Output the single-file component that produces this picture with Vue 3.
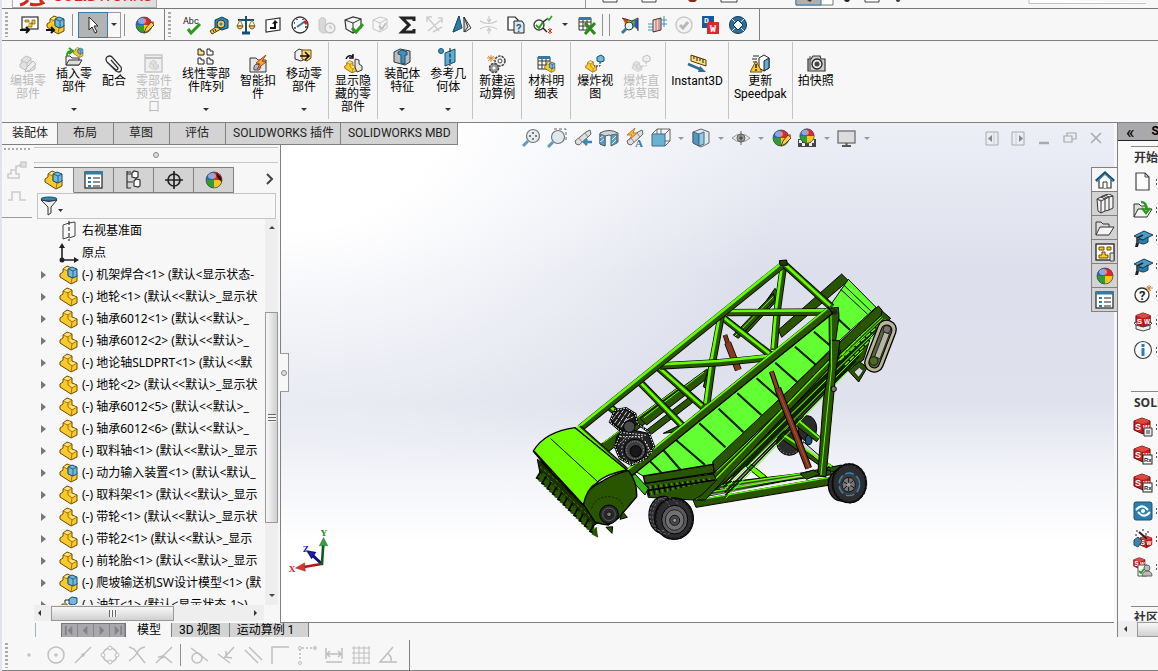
<template>
  <div class="app">
    <!-- clipped title strip -->
    <header class="title-strip">
      <div class="brand">
        <svg class="brand-mark" viewBox="0 0 26 8"><path d="M1 5Q6 4 9 0M11 4Q18 6 24 3L21 0" /></svg>
        <span class="brand-name"><b>SOLID</b>WORKS</span>
      </div>
      <div class="quick-bar">
        <svg viewBox="0 0 560 8">
          <path d="M17 0V2H31V0M56 0V2H70V0M135 0V2H151V0M279 0V2H293V0" fill="#fff" stroke="#444" />
          <path d="M102 0H111L109 2H104Z" fill="#8c2a16" />
          <path d="M210 -1V5H247V-1" fill="#fff" stroke="#777" />
          <path d="M210 -1V5H235V-1" fill="#b0b0b0" stroke="#2f7fb5" />
          <path d="M221 0H226L224 2Z" fill="#333" />
          <circle cx="261" cy="-1" r="3" fill="#222" />
          <circle cx="312" cy="0" r="2" fill="#333" />
          <path d="M443 -1V3.5H580" fill="#fff" stroke="#c4c4c4" />
        </svg>
      </div>
    </header>

    <!-- standard and tools toolbars -->
    <nav class="toolbar">
      <div class="tool-group first">
        <span class="grip"></span>
        <button v-for="t in fileTools" :key="t" class="tool" :aria-label="t"><svg viewBox="0 0 20 20" v-html="icons[t]"></svg></button>
        <span class="sep"></span>
        <div class="select-tool">
          <button class="select-main" aria-label="select"><svg viewBox="0 0 20 20" v-html="icons.cursor"></svg></button>
          <button class="select-drop" aria-label="select options"><i class="caret"></i></button>
        </div>
        <span class="sep"></span>
        <button class="tool" aria-label="appearance"><svg viewBox="0 0 20 20" v-html="icons.ballPencil"></svg></button>
      </div>
      <div class="tool-group second">
        <span class="grip"></span>
        <button v-for="t in evalTools" :key="t" class="tool" :aria-label="t"><svg viewBox="0 0 20 20" v-html="icons[t]"></svg></button>
        <button class="drop" aria-label="more checks"><i class="caret"></i></button>
        <button class="tool" aria-label="excel"><svg viewBox="0 0 20 20" v-html="icons.excel"></svg></button>
        <span class="sep double"></span>
        <button v-for="t in simTools" :key="t" class="tool" :aria-label="t"><svg viewBox="0 0 20 20" v-html="icons[t]"></svg></button>
      </div>
    </nav>

    <!-- command ribbon -->
    <section class="ribbon">
      <div v-for="(group, g) in ribbon" :key="g" class="ribbon-group">
        <button v-for="c in group" :key="c.label" class="command" :class="{ menu: c.menu }" :disabled="c.off">
          <svg viewBox="0 0 20 20" v-html="icons[c.icon]"></svg>
          <span class="command-label">{{ c.label }}</span>
          <i v-if="c.menu" class="caret"></i>
        </button>
      </div>
    </section>

    <div class="workspace">
      <nav class="ribbon-tabs">
        <button v-for="t in tabs" :key="t" :class="{ active: t === tab }" @click="tab = t">{{ t }}</button>
      </nav>

      <div class="side">
        <div class="mini-bar">
          <span class="grip-row"></span>
          <button aria-label="steps"><svg viewBox="0 0 20 20" v-html="icons.steps"></svg></button>
          <button aria-label="pulse"><svg viewBox="0 0 20 20" v-html="icons.pulse"></svg></button>
        </div>

        <aside class="manager">
          <div class="splitter"><i class="knob"></i></div>
          <div class="manager-tabs">
            <button v-for="(m, i) in managerTabs" :key="m" :class="{ active: i === 0 }" :aria-label="m"><svg viewBox="0 0 20 20" v-html="icons[m]"></svg></button>
            <button class="more" aria-label="more"><svg viewBox="0 0 20 20"><path d="M11 4L16 9L11 14" fill="none" stroke="#444" stroke-width="2" /></svg></button>
          </div>
          <div class="filter">
            <label for="tree-filter"><svg viewBox="0 0 26 20" v-html="icons.filter"></svg></label>
            <input id="tree-filter" v-model="filter" type="text" />
          </div>
          <div class="tree-area">
            <ul class="tree">
              <li v-for="n in tree" :key="n.text">
                <button v-if="n.icon !== 'plane' && n.icon !== 'origin'" class="twisty" aria-label="expand"></button>
                <span v-else class="twisty-gap"></span>
                <svg viewBox="0 0 20 20" v-html="icons[n.icon]"></svg>
                <span class="node-text">{{ n.text }}</span>
              </li>
            </ul>
            <div class="vscroll">
              <i class="arrow up"></i>
              <div class="thumb"><i></i></div>
              <i class="arrow down"></i>
            </div>
          </div>
          <div class="hscroll">
            <i class="arrow left"></i>
            <div class="thumb"><i></i></div>
            <i class="arrow right"></i>
          </div>
        </aside>
      </div>

      <main class="viewport">
        <div class="view-bar">
          <div class="view-tools">
            <template v-for="v in viewTools" :key="v.icon">
              <button class="view-tool" :aria-label="v.icon"><svg viewBox="0 0 20 20" v-html="icons[v.icon]"></svg></button>
              <button v-if="v.menu" class="view-drop" :aria-label="v.icon + ' options'"><i class="caret"></i></button>
            </template>
          </div>
          <div class="view-tools window-tools">
            <button v-for="w in windowTools" :key="w" class="view-tool" :aria-label="w"><svg viewBox="0 0 20 20" v-html="icons[w]"></svg></button>
          </div>
        </div>

        <button class="flyout" aria-label="collapse panel"><i class="knob"></i></button>

        <div class="task-tabs">
          <button v-for="(t, i) in taskTabs" :key="t" :class="{ active: i === 0 }" :aria-label="t"><svg viewBox="0 0 20 20" v-html="icons[t]"></svg></button>
        </div>

        <!-- feeder conveyor assembly -->
        <svg class="model" viewBox="0 0 1170 900">
          <!-- far wheels -->
          <g stroke="#000" stroke-width="3">
            <ellipse cx="862" cy="535" rx="28" ry="38" fill="#2b2b2b" />
            <ellipse cx="808" cy="578" rx="38" ry="38" fill="#2b2b2b" />
            <ellipse cx="866" cy="570" rx="10" ry="14" fill="#1c4f70" />
          </g>
          <ellipse cx="808" cy="578" rx="34" ry="34" fill="none" stroke="#777" stroke-width="4" stroke-dasharray="3 7" />
          <!-- far side frame -->
          <g :fill="dark" stroke="#000" stroke-width="3">
            <path d="M240 585L480 408L500 425L265 605Z" />
            <path d="M360 505L560 358L578 372L380 525Z" />
            <path d="M380 540L510 440L525 452L395 552Z" />
            <path d="M665 258L765 115L772 125L772 150L685 245Z" />
            <path d="M640 255L760 130L766 148L655 265Z" />
            <path d="M775 240L965 72L985 92L785 262Z" />
            <path d="M430 550L480 525L470 545Z" />
            <path d="M550 410L565 355L578 372L566 420Z" />
          </g>
          <path d="M250 578L478 412M372 503L552 366M645 258L760 140" :stroke="green" stroke-width="3" />
          <!-- rear cylinder -->
          <path d="M615 255L625 285" stroke="#000" stroke-width="14" />
          <path d="M615 255L625 285" stroke="#823018" stroke-width="10" />
          <path d="M623 278L655 360" stroke="#000" stroke-width="21" />
          <path d="M623 278L655 360" stroke="#8a3a20" stroke-width="16" />
          <!-- chassis -->
          <g stroke="#000" stroke-width="3">
            <path d="M785 550L940 650L925 665L775 560Z" :fill="dark" />
            <path d="M830 505L900 560L890 575L825 525Z" :fill="dark" />
            <path d="M850 575L930 645L922 655L845 590Z" fill="#cfd6dd" />
            <path d="M690 640L740 680L722 686L678 650Z" :fill="green" />
            <path d="M560 725L965 645L965 660L545 742Z" :fill="dark" />
            <path d="M590 700L930 660L935 674L570 722Z" :fill="dark" />
            <path d="M520 752L925 682L925 706L528 772Z" :fill="dark" />
          </g>
          <path d="M788 553L935 650M834 510L898 563" :stroke="green" stroke-width="6" />
          <path d="M522 752L925 683M560 728L920 666M600 706L890 664" :stroke="green" stroke-width="4" />
          <path d="M570 735L900 680M600 716L860 675" stroke="#ddd" stroke-width="2" />
          <!-- underside of conveyor -->
          <path d="M575 655L1085 182L1112 205L1052 262L1030 330L945 390L700 630L545 750L520 750Z" :fill="dark" stroke="#000" stroke-width="3" />
          <path v-for="(d, i) in underLines" :key="'u' + i" :d="d" :stroke="i % 3 ? '#0c1c00' : green" :stroke-width="i % 3 ? 5 : 3" />
          <path d="M960 330L1100 205M975 345L1085 235M965 315L1060 215" :stroke="green" stroke-width="4" stroke-dasharray="16 5" />
          <!-- belt -->
          <path d="M340 660L560 495L750 340L890 225L985 88L1068 172L955 275L580 645L375 682Z" :fill="belt" stroke="#000" stroke-width="3" />
          <path v-for="(d, i) in slats" :key="'s' + i" :d="d" stroke="#000" stroke-width="6" />
          <path v-for="(d, i) in slats" :key="'t' + i" :d="d" :stroke="dark" stroke-width="2" />
          <path d="M962 118L1042 192M972 106L1055 185" stroke="#000" stroke-width="3" />
          <path d="M578 635L1075 168L1086 180L1084 195L582 668Z" :fill="dark" stroke="#000" stroke-width="3" />
          <path d="M590 665L1084 200" :stroke="green" stroke-width="3" />
          <!-- long brace -->
          <path d="M520 750L945 310L962 300L955 325L555 750Z" :fill="dark" stroke="#000" stroke-width="3" />
          <path d="M527 748L945 316" :stroke="green" stroke-width="4" />
          <!-- post -->
          <path d="M927 175L955 172L957 200L945 285L928 285Z" :fill="dark" stroke="#000" stroke-width="3" />
          <path d="M930 270L960 272L948 360L918 680L893 678L910 450L928 340Z" :fill="dark" stroke="#000" stroke-width="3" />
          <path d="M933 190L935 350L903 675" fill="none" :stroke="green" stroke-width="3" />
          <circle cx="944" cy="186" r="8" fill="#222" />
          <circle cx="941" cy="417" r="8" fill="#777" stroke="#000" stroke-width="3" />
          <!-- feed tray and screws -->
          <path d="M375 700L580 672L590 690L545 735L520 750L385 742Z" :fill="dark" stroke="#000" stroke-width="3" />
          <path v-for="(d, i) in screws" :key="'c' + i" :d="d" :stroke="i % 2 ? '#4a9a00' : '#000'" stroke-width="4" />
          <path d="M380 722L585 690" stroke="#000" stroke-width="5" />
          <path d="M370 678L580 643L582 668L375 700Z" :fill="dark" stroke="#000" stroke-width="4" />
          <path d="M325 680L345 672L385 715L375 735Z" fill="#39b81c" stroke="#000" stroke-width="3" />
          <!-- upper truss -->
          <template v-for="(b, i) in beams" :key="'b' + i">
            <path :d="b" fill="none" stroke="#000" stroke-width="22" />
            <path :d="b" fill="none" :stroke="dark" stroke-width="17" />
            <path :d="b" fill="none" :stroke="green" stroke-width="8" transform="translate(-4 -5)" />
          </template>
          <path d="M320 660L925 172L938 190L332 680Z" :fill="dark" stroke="#000" stroke-width="4" />
          <path d="M322 660L922 176" :stroke="green" stroke-width="5" />
          <path d="M778 32L800 30L802 46L780 46Z" fill="#1f3d00" stroke="#000" stroke-width="3" />
          <!-- front cylinder -->
          <path d="M754 364L775 425" stroke="#000" stroke-width="15" />
          <path d="M754 364L775 425" stroke="#9a3c1c" stroke-width="9" />
          <path d="M773 415L866 655" stroke="#000" stroke-width="21" />
          <path d="M773 415L866 655" stroke="#7c321c" stroke-width="15" />
          <path d="M776 425L866 650" stroke="#ad5638" stroke-width="3" />
          <path d="M840 672L880 660L900 672L860 688Z" :fill="dark" stroke="#000" stroke-width="3" />
          <!-- discharge drive guard -->
          <path d="M985 362L1018 335L1042 352L1016 396Z" :fill="dark" stroke="#000" stroke-width="3" />
          <path d="M1002 366L1018 352L1030 362L1016 382Z" fill="#d7dae4" stroke="#000" stroke-width="2" />
          <g transform="rotate(21 1083 290)">
            <rect x="1053" y="208" width="56" height="162" rx="27" fill="#b9b694" stroke="#000" stroke-width="4" />
            <rect x="1065" y="222" width="32" height="136" rx="16" fill="#5d6346" stroke="#000" stroke-width="3" />
            <rect x="1076" y="245" width="17" height="80" fill="#b6b4a5" stroke="#000" stroke-width="2" />
            <circle cx="1081" cy="235" r="11" fill="#776f70" stroke="#000" stroke-width="2" />
            <circle cx="1078" cy="338" r="13" fill="#4a6a24" stroke="#000" stroke-width="2" />
          </g>
          <!-- motor and gearbox -->
          <g stroke="#000" stroke-width="3">
            <path d="M270 515L285 482L318 476L345 492L352 520L325 545L295 540Z" fill="#1a1a1a" />
            <path d="M290 560L315 535L385 550L402 590L380 622L335 645L300 625L285 590Z" fill="#222" />
            <circle cx="345" cy="600" r="32" fill="#3d3d40" />
            <circle cx="347" cy="604" r="17" fill="#18181a" />
            <circle cx="328" cy="530" r="17" fill="#4a4a4d" />
          </g>
          <path d="M276 510L300 480M284 519L310 481M293 526L321 484M303 531L331 488M316 512L340 500" stroke="#ddd" stroke-width="3" stroke-dasharray="14 4" />
          <path d="M270 516L285 481L318 475L346 492L352 520L385 545L402 590L380 622L335 645L300 625L285 590L305 545Z" fill="none" stroke="#000" stroke-width="7" />
          <path d="M270 516L285 481L318 475L346 492L352 520L385 545L402 590L380 622L335 645L300 625L285 590L305 545Z" fill="none" stroke="#fff" stroke-width="3" stroke-dasharray="5 4" />
          <circle cx="345" cy="600" r="26" fill="none" stroke="#ccc" stroke-width="2" stroke-dasharray="3 5" />
          <circle cx="345" cy="600" r="40" fill="none" stroke="#eee" stroke-width="3" stroke-dasharray="4 7" />
          <path d="M300 560L370 560M295 585L320 560M375 575L395 610M310 548L380 556" stroke="#eee" stroke-width="3" stroke-dasharray="5 4" />
          <!-- pick-up reel -->
          <path d="M52 628L200 740L240 815L215 830L62 680Z" fill="#183000" stroke="#000" stroke-width="3" />
          <path v-for="(d, i) in tines" :key="'n' + i" :d="d" :fill="dark" :stroke="i % 2 ? dark : '#000'" stroke-width="5" />
          <path d="M60 650L200 765M70 672L210 800" stroke="#3f8500" stroke-width="3" stroke-dasharray="9 6" />
          <!-- hood -->
          <path d="M190 762Q195 720 240 698Q280 672 325 662Q352 695 350 740L295 805L265 825Q225 820 222 812Z" :fill="dark" stroke="#000" stroke-width="4" />
          <path d="M40 603Q75 545 165 533L320 660Q250 675 232 698Q200 715 190 765Q100 680 40 603Z" fill="#70ff00" stroke="#000" stroke-width="4" />
          <path d="M92 566L235 697" stroke="#000" stroke-width="3" />
          <path d="M42 604L190 765" stroke="#000" stroke-width="5" />
          <path d="M215 775Q225 740 270 740Q305 745 310 770" fill="none" stroke="#000" stroke-width="2" stroke-dasharray="6 5" />
          <circle cx="267" cy="793" r="28" fill="#26282a" stroke="#000" stroke-width="3" />
          <circle cx="267" cy="793" r="19" fill="none" stroke="#777" stroke-width="2" />
          <circle cx="267" cy="793" r="7" fill="#777" stroke="#000" stroke-width="2" />
          <path d="M258 832L276 850L278 830ZM300 808L322 802L308 785Z" :fill="dark" stroke="#000" stroke-width="3" />
          <!-- near wheels -->
          <g fill="#2d2d2f" stroke="#000" stroke-width="4">
            <ellipse cx="430" cy="795" rx="43" ry="56" />
            <ellipse cx="462" cy="806" rx="58" ry="62" />
            <ellipse cx="965" cy="705" rx="40" ry="48" />
            <ellipse cx="988" cy="700" rx="51" ry="58" />
          </g>
          <g fill="none" stroke="#111" stroke-width="7" stroke-dasharray="7 6">
            <ellipse cx="462" cy="806" rx="56" ry="60" />
            <ellipse cx="422" cy="795" rx="32" ry="48" stroke="#777" stroke-width="3" />
            <ellipse cx="440" cy="797" rx="42" ry="55" stroke="#888" stroke-width="2" />
            <ellipse cx="988" cy="700" rx="50" ry="57" />
          </g>
          <ellipse cx="464" cy="809" rx="39" ry="43" fill="#5b5b5e" stroke="#000" stroke-width="3" />
          <ellipse cx="464" cy="810" rx="28" ry="31" fill="#717174" stroke="#222" stroke-width="3" />
          <circle cx="464" cy="811" r="15" fill="#4b4b4e" stroke="#111" stroke-width="3" />
          <circle cx="464" cy="811" r="6" fill="#999" stroke="#111" stroke-width="2" />
          <ellipse cx="988" cy="703" rx="31" ry="34" fill="#3c3c3f" stroke="#2f86b8" stroke-width="4" stroke-dasharray="26 9" />
          <ellipse cx="986" cy="704" rx="20" ry="22" fill="#77777a" stroke="#111" stroke-width="3" />
          <path d="M970 695L1002 713M986 684L986 724M972 716L1000 692" stroke="#111" stroke-width="3" />
          <circle cx="986" cy="704" r="6" fill="#999" />
        </svg>

        <svg class="triad" viewBox="855 435 135 145">
          <path d="M965 552L938 527" stroke="#12127c" stroke-width="9" />
          <path d="M922 514L946 518L935 535Z" fill="#2020c8" stroke="#101070" stroke-width="4" />
          <path d="M968 552L912 562" stroke="#b01818" stroke-width="8" />
          <path d="M886 565L914 549L916 575Z" fill="#e03030" stroke="#701010" />
          <path d="M966 556L970 495" stroke="#0e5c1c" stroke-width="8" />
          <path d="M971 473L984 498L958 498Z" fill="#3f9c46" stroke="#0b4a14" />
          <text x="866" y="578" fill="#f01414">X</text>
          <text x="962" y="467" fill="#128a12">Y</text>
          <text x="908" y="518" fill="#1414e0">Z</text>
        </svg>
      </main>

      <aside class="task-pane">
        <div class="task-head">
          <button aria-label="collapse">«</button>
          <b>S</b>
        </div>
        <div class="task-body">
          <section class="start">
            <h2>开始</h2>
            <a v-for="r in startLinks" :key="r.id" href="#" :aria-label="r.id"><svg viewBox="0 0 20 20" v-html="icons[r.icon]"></svg><i></i></a>
          </section>
          <section class="tools">
            <h2>SOLI</h2>
            <a v-for="r in toolLinks" :key="r.id" href="#" :aria-label="r.id"><svg viewBox="0 0 20 20" v-html="icons[r.icon]"></svg><i></i></a>
          </section>
          <section class="community">
            <h2>社区</h2>
          </section>
        </div>
        <div class="hscroll">
          <i class="arrow left"></i>
          <div class="thumb"></div>
        </div>
      </aside>

      <nav class="sheet-tabs">
        <div class="sheet-nav">
          <button v-for="n in sheetNav" :key="n" :aria-label="n"><svg viewBox="0 0 16 14" v-html="icons[n]"></svg></button>
        </div>
        <button v-for="s in sheets" :key="s" class="sheet" :class="{ active: s === sheet }" @click="sheet = s">{{ s }}</button>
      </nav>
    </div>

    <!-- sketch relations -->
    <footer class="toolbar sketch-bar">
      <div class="tool-group">
        <span class="grip"></span>
        <button v-for="t in snapTools" :key="t" class="tool" :aria-label="t"><svg viewBox="0 0 20 20" v-html="icons[t]"></svg></button>
        <span class="sep"></span>
        <button v-for="t in relationTools" :key="t" class="tool" :aria-label="t"><svg viewBox="0 0 20 20" v-html="icons[t]"></svg></button>
      </div>
    </footer>
  </div>
</template>

<script setup>
import { ref } from 'vue'

const tab = ref('装配体')
const sheet = ref('模型')
const filter = ref('')

const dark = '#2a5500'
const green = '#66ff00'
const belt = '#62ff33'

// shared icon pieces
const part =
  '<path d="M4 4L8 1L13 3V8L18 10V16L12 19L1 12V9L4 7Z" fill="#fcc92b" stroke="#6b4a00" stroke-linejoin="round"/><path d="M4 4L9 6L13 3M9 6V10L13 13L18 10M13 13L12 19" fill="none" stroke="#8a6200" stroke-width=".8"/><path d="M5 4L8 2L12 3L9 5Z" fill="#ffe58a"/><path d="M10 9L13 9L17 10L13 12Z" fill="#ffe58a"/>'
const cube =
  '<path d="M9 4L13 2L18 4V11L14 13L9 11Z" fill="#6fb9dc" stroke="#174f70"/><path d="M9 4L14 6L18 4M14 6V13" fill="none" stroke="#174f70" stroke-width=".8"/>'
const grayPart =
  '<path d="M3 6L8 2L13 4V8L17 10V15L11 18L2 13V10L4 9Z" fill="#e2e2e2" stroke="#c0c0c0"/><path d="M4 7L9 9L13 5M9 9V13L12 14L17 10" fill="none" stroke="#c0c0c0"/>'
const ball =
  '<circle cx="10" cy="10" r="8" fill="#2d63c8"/><path d="M10 2A8 8 0 0 1 18 10H10Z" fill="#d92b2b"/><path d="M18 10A8 8 0 0 1 10 18V10Z" fill="#f2c522"/><path d="M10 18A8 8 0 0 1 2 10H10Z" fill="#2f9c3a"/><ellipse cx="8" cy="6" rx="4" ry="3" fill="#fff" opacity=".45"/><circle cx="10" cy="10" r="8" fill="none" stroke="#444" stroke-width=".7"/>'
const pencil = '<path d="M10 18L12 13L17 7L20 10L14 16Z" fill="#f6cf52" stroke="#5b3c00"/><path d="M17 7L20 10L21 8L19 6Z" fill="#b86a58"/>'
const folder = '<path d="M1 17V4H6L8 6H14V9" fill="#ddd" stroke="#333"/><path d="M1 17L5 9H19L14 17Z" fill="#f4f4f4" stroke="#333"/>'
const cap =
  '<path d="M1 8L11 3L20 7L10 12Z" fill="#4b9bc4" stroke="#123f5c"/><path d="M5 11V14Q10 18 15 14V9L10 12Z" fill="#2f7ba5" stroke="#123f5c"/><path d="M10 7L4 10V17" fill="none" stroke="#222" stroke-width="1.5"/><path d="M3 15H6L5 19H2Z" fill="#222"/>'
const swCube =
  '<path d="M1 4L9 1L17 4V13L10 17L1 13Z" fill="#c8201f" stroke="#5e0808"/><path d="M1 4L10 7L17 4L9 1Z" fill="#dc4a44"/><path d="M10 7V17" stroke="#7c0d0d"/><text x="2" y="13" font-size="9" font-weight="bold" fill="#fff" font-family="Liberation Sans">S</text><text x="10" y="13" font-size="7" font-weight="bold" fill="#fff" font-family="Liberation Sans">W</text>'
const rx = '<rect x="10" y="10" width="9" height="9" fill="#fff" stroke="#222"/><text x="11" y="17" font-size="6" font-weight="bold" fill="#222" font-family="Liberation Sans">Rx</text>'
const telescope = '<path d="M2 13L13 4L17 2L18 6L15 9L6 17Q2 17 2 13Z" fill="#dedede" stroke="#666"/><path d="M6 10L9 14M12 5L15 9" stroke="#888"/>'
const grid = '<path d="M2 3H14V15H2ZM2 7H14M2 11H14M6 3V15M10 3V15" fill="#fff" stroke="#333"/><path d="M2 2H14V5H2Z" fill="#2f7ba5"/>'

const icons = {
  openPart: '<rect x="3" y="2" width="16" height="12" fill="#fff" stroke="#333" stroke-width="1.2"/><path d="M6 5H10V7H6ZM13 5H16V9H13ZM10 8H13V12H8" fill="#f3c431" stroke="#775500" stroke-width=".7"/><path d="M1 15H9M7 12L10 15L7 18" fill="none" stroke="#111" stroke-width="2"/>',
  openAsm: part + cube + '<path d="M0 15H7M5 12L8 15L5 18" fill="none" stroke="#111" stroke-width="2"/>',
  cursor: '<path d="M6 2V15L9 12L12 18L14 17L11 11H15Z" fill="#fff" stroke="#222"/>',
  ballPencil: ball + pencil,
  spell: '<text x="1" y="9" font-size="9" fill="#222" font-family="Roboto">Abc</text><path d="M6 14L9 18L18 9" fill="none" stroke="#2c9a1d" stroke-width="3"/>',
  tape: '<path d="M6 5L13 2L19 5V13L13 15L6 13Z" fill="#2f86b4" stroke="#123f5c"/><circle cx="12" cy="9" r="4" fill="#f0c64c" stroke="#123f5c"/><circle cx="12" cy="9" r="1.5" fill="#2f86b4"/><path d="M7 12L1 16L3 19L12 14Z" fill="#f6cf52" stroke="#5b3c00"/><path d="M4 15L5 17M6 14L7 16" stroke="#222"/>',
  scale: '<path d="M10 1V17M2 5H18" stroke="#174f70" stroke-width="2"/><path d="M6 18H14" stroke="#174f70" stroke-width="3"/><path d="M4 5L1 11H7ZM16 5L13 11H19Z" fill="none" stroke="#9a7420"/><path d="M1 11H7Q6 14 4 14Q2 14 1 11ZM13 11H19Q18 14 16 14Q14 14 13 11Z" fill="#f1d079" stroke="#7a5500"/>',
  section: '<path d="M3 5L17 3V15L3 17Z" fill="#fff" stroke="#333" stroke-width="1.2"/><path d="M7 13H12V7" fill="none" stroke="#111" stroke-width="2"/><path d="M9 9L12 5L15 8Z" fill="#111"/>',
  gauge: '<circle cx="10" cy="10" r="8" fill="#fff" stroke="#333" stroke-width="1.3"/><path d="M4 8H5M7 4V5M13 4V5M4 13H6M15 12H17" stroke="#333" stroke-width="1.5"/><path d="M7 12L14 7" stroke="#2b79ab" stroke-width="2"/><path d="M14 6L17 9" stroke="#d42222" stroke-width="3"/>',
  timing: '<path d="M2 5Q6 0 9 5L8 10L11 13L9 18Q1 19 2 11Z" fill="#d8d8d8" stroke="#c8c8c8"/><circle cx="13" cy="13" r="5" fill="#f0f0f0" stroke="#c2c2c2" stroke-width="1.4"/><path d="M13 10V13H15" stroke="#bbb" fill="none"/>',
  cubeCheck: '<path d="M1 5L9 2L17 4V13L9 18L2 14Z" fill="#f6f6f6" stroke="#333" stroke-width="1.2"/><path d="M1 5L9 8L17 4M9 8V18" stroke="#333" fill="none"/><path d="M8 13L12 17L19 9" fill="none" stroke="#2c9a1d" stroke-width="3"/>',
  cubeGray: '<path d="M2 5L9 2L16 4V13L9 17L2 14Z" fill="#f6f6f6" stroke="#c6c6c6"/><path d="M2 5L9 8L16 4M9 8V17" stroke="#c6c6c6" fill="none"/><path d="M8 11L11 14L15 8" fill="none" stroke="#c0c0c0" stroke-width="2"/>',
  sigma: '<path d="M16 6V3H4L11 10L4 17H16V14" fill="none" stroke="#222" stroke-width="3"/>',
  flow: '<path d="M3 3L14 16M16 5L3 16M2 7V2H7M13 3H17V8M8 17L17 12" fill="none" stroke="#cdcdcd" stroke-width="1.5"/>',
  mirror: '<path d="M1 17L7 1V14Z" fill="#64aed4" stroke="#174f70"/><path d="M7 1L10 13L1 17Z" fill="#2f7ba5" stroke="#174f70"/><path d="M12 2L19 13L13 17Z" fill="#f4f4f4" stroke="#333"/><path d="M12 2V17L16 12Z" fill="#ccc" stroke="#333"/>',
  squeeze: '<path d="M10 1V6M8 4L10 7L12 4M10 19V14M8 16L10 13L12 16M1 6Q9 11 18 6M1 14Q9 9 18 14" fill="none" stroke="#c8c8c8" stroke-width="1.2"/>',
  docHelp: '<path d="M2 2H9L12 5V15H2Z" fill="#fff" stroke="#222" stroke-width="1.2"/><path d="M8 6H16L18 9V18H8Z" fill="#dfe8ee" stroke="#222"/><text x="10" y="17" font-size="11" font-weight="bold" fill="#1c658f" font-family="Roboto">?</text>',
  checks: '<circle cx="6" cy="10" r="5" fill="#fff" stroke="#444" stroke-width="1.4"/><path d="M3 10L6 13L10 7" fill="none" stroke="#2c9a1d" stroke-width="2"/><path d="M10 7L14 4M10 13L14 17" stroke="#222" stroke-width="1.5"/><path d="M14 3L16 5L19 1" fill="none" stroke="#2c9a1d" stroke-width="1.5"/><path d="M15 14L19 18M19 14L15 18M17 13V19" stroke="#d33a12"/>',
  excel: grid + '<path d="M8 8L18 19M18 8L8 19" stroke="#2b8a1e" stroke-width="3"/>',
  simFea: '<path d="M3 3L12 6L18 4V15L13 12L9 16L5 12Z" fill="#f0d020"/><path d="M2 3L8 5L7 10Z" fill="#e03818"/><path d="M11 6L15 5L14 13L10 11Z" fill="#39b54a"/><path d="M15 5L18 4V15L14 11Z" fill="#2a55d0"/><path d="M2 3L12 6L18 3V16" fill="none" stroke="#333"/><circle cx="9" cy="11" r="4" fill="#dff1fa" stroke="#333"/><path d="M6 14L2 18" stroke="#2f7ba5" stroke-width="3"/>',
  flowSim: '<path d="M6 5L14 3V15L6 17Z" fill="#f3d7d4" stroke="#333"/><path d="M9 4V16M12 4V15" stroke="#c0352b" stroke-width=".8"/><path d="M1 9H6M1 12H6M1 15H6M14 5H20M14 9H20M17 1V12" stroke="#3a94c4" fill="none"/>',
  okGray: '<circle cx="10" cy="10" r="8" fill="#f4f4f4" stroke="#cacaca" stroke-width="1.5"/><path d="M6 10L9 13L14 7" fill="none" stroke="#b8b8b8" stroke-width="3"/>',
  drawWorks: '<rect x="1" y="1" width="12" height="12" fill="#1459a5"/><rect x="6" y="7" width="12" height="12" fill="#e3262e"/><text x="3" y="8" font-size="8" font-weight="bold" fill="#fff" font-family="Liberation Mono">D</text><text x="9" y="17" font-size="10" font-weight="bold" fill="#fff" font-family="Liberation Mono">W</text>',
  lifebuoy: '<circle cx="10" cy="10" r="8.5" fill="#2d6f9b" stroke="#12374d"/><path d="M10 5L15 10L10 15L5 10Z" fill="#fff" stroke="#12374d"/><path d="M4 4L7 7M16 4L13 7M4 16L7 13M16 16L13 13" stroke="#dbeaf3"/>',

  editPart: grayPart + '<path d="M7 18L9 13L15 7L18 10L12 16Z" fill="#eee" stroke="#b9b9b9"/>',
  insertPart: '<g transform="translate(9 0) scale(.55)">' + part + cube + '</g><path d="M2 18V9H6L8 11H15V18Z" fill="#eee" stroke="#333"/><path d="M2 18L5 13H18L15 18Z" fill="#ddd" stroke="#333"/><path d="M3 9Q3 4 7 4M5 1L9 4L5 7" fill="none" stroke="#2c9a1d" stroke-width="2"/>',
  clip: '<path d="M4 9L12 17Q15 19 17 17Q18 15 17 13L8 3Q6 1 3 3Q1 5 3 8L12 16Q14 16 14 14L7 6" fill="none" stroke="#333" stroke-width="1.3"/>',
  preview: '<rect x="1" y="1" width="17" height="17" fill="#f0f0f0" stroke="#c4c4c4" stroke-width="1.4"/><path d="M1 4H18" stroke="#c4c4c4" stroke-width="2"/><g transform="translate(4 5) scale(.62)">' + grayPart + '</g>',
  pattern: '<path d="M2 2H5V4H8V8H2Z" fill="#ffe27a" stroke="#222"/><path d="M11 2H14V4H17V8H11ZM2 11H5V13H8V17H2ZM11 11H14V13H17V17H11Z" fill="#fff" stroke="#222"/>',
  fastener: '<path d="M2 18V4H8L10 6H18V18Z" fill="#e8e8e8" stroke="#333"/><path d="M6 16Q5 10 10 10L13 13L11 16Z" fill="#bbb" stroke="#444"/><path d="M18 1L8 9L12 10L9 15L18 8L14 7Z" fill="#f3a934" stroke="#b03d13"/>',
  movePart: '<path d="M1 5L5 2L11 4V12L7 14L1 12Z" fill="#f2f2f2" stroke="#333"/><path d="M8 3H17V11L13 14L8 12Z" fill="#ffd877" stroke="#6b4a00"/><path d="M6 9H14M11 5L15 9L11 13" fill="none" stroke="#111" stroke-width="1.6"/>',
  showHide: '<g transform="translate(1 6) scale(.68)">' + part + '</g><path d="M12 5L16 6V10L19 12V16L14 18L12 13Z" fill="#e8e8e8" stroke="#333"/><path d="M3 5Q5 0 10 3M10 0V4H6" fill="none" stroke="#111" stroke-width="1.5"/>',
  asmFeature: '<path d="M2 5L8 2L18 4V15L13 18L2 15Z" fill="#bdbdbd" stroke="#333"/><path d="M6 5L10 3L15 5V8H13V17L9 16V8L6 7Z" fill="#3f94bf" stroke="#174f70"/>',
  refGeom: '<circle cx="3" cy="4" r="2.500" fill="#3f94bf" stroke="#174f70"/><path d="M7 6L17 2V15L7 19Z" fill="#5faed3" stroke="#174f70"/><path d="M12 1V19" stroke="#111" stroke-dasharray="4 1.5"/>',
  motion: '<circle cx="13" cy="7" r="5" fill="#f1f1f1" stroke="#444" stroke-width="1.5" stroke-dasharray="2.5 1"/><circle cx="13" cy="7" r="2" fill="#fff" stroke="#444"/><circle cx="7" cy="14" r="4.5" fill="#999" stroke="#444" stroke-width="1.5" stroke-dasharray="2.5 1"/><circle cx="7" cy="14" r="1.5" fill="#fff"/><path d="M4 1V8M0 4H8M1 2L7 7M7 2L1 7" stroke="#d0720c" stroke-width=".8"/>',
  bom: grid + '<g transform="translate(8 7) scale(.6)">' + part + cube + '</g>',
  explode: '<g transform="translate(0 6) scale(.64)">' + part + '</g><path d="M12 3L16 1L19 3V7L16 8L12 7Z" fill="#6fb9dc" stroke="#174f70"/><path d="M15 8V12H9" fill="none" stroke="#222" stroke-dasharray="2 1"/>',
  explodeGray: '<g transform="translate(0 6) scale(.64)">' + grayPart + '</g><path d="M12 3L16 1L19 3V7L16 8L12 7Z" fill="#eee" stroke="#c0c0c0"/><path d="M15 8V12H9" fill="none" stroke="#c0c0c0" stroke-dasharray="2 1"/>',
  instant: '<path d="M4 1L19 6V12L4 7Z" fill="#f8dc79" stroke="#5b3c00"/><path d="M7 2V5M10 3V7M13 4V7M16 5V9" stroke="#222"/><path d="M1 10L15 16" stroke="#2b6e96" stroke-width="2.5"/><path d="M13 12L19 18L11 18Z" fill="#2b6e96"/>',
  speedpak: '<path d="M9 4L14 1L19 4V14L14 17L9 14Z" fill="#fff" stroke="#222"/><path d="M14 7L19 4V14L14 17Z" fill="#5faed3" stroke="#222"/><path d="M3 2H9M2 5H7M3 8H6" stroke="#222"/><path d="M6 7L12 18H0Z" fill="#ffc918" stroke="#7a5500"/><path d="M6 10V14M6 15V17" stroke="#222" stroke-width="1.5"/>',
  camera: '<path d="M2 5H5L7 2H14L15 5H19V17H2Z" fill="#cfcfcf" stroke="#333" stroke-width="1.2"/><circle cx="11" cy="10" r="5" fill="#eee" stroke="#222" stroke-width="1.3"/><circle cx="11" cy="10" r="2.5" fill="#444"/><path d="M4 2V16" stroke="#444"/>',

  steps: '<path d="M1 17V13H4V9H9V13H12V17Z" fill="none" stroke="#cbcbcb" stroke-width="1.5"/><path d="M9 9V5H13V3M14 1H19V6H14Z" fill="#e0e0e0" stroke="#cbcbcb" stroke-width="1.5"/>',
  pulse: '<path d="M1 14H5V6H13V14H19" fill="none" stroke="#cbcbcb" stroke-width="1.5"/>',
  asm: part + cube,
  part,
  props: '<rect x="1" y="2" width="17" height="16" fill="#fff" stroke="#222" stroke-width="1.2"/><path d="M1 3H19" stroke="#2f7ba5" stroke-width="3"/><path d="M4 8H7M4 12H7M4 16H7" stroke="#2f7ba5" stroke-width="2"/><path d="M9 8H16M9 12H16M9 16H16" stroke="#222" stroke-width="1.2"/>',
  config: '<path d="M3 1V18M7 2H3V18H7M3 4H9M3 12H9" fill="none" stroke="#333" stroke-width="1.2"/><path d="M8 3L10 1L14 2V7L12 8L8 7ZM10 11L12 9L16 10V16L14 17L10 16Z" fill="#fff" stroke="#333" stroke-width="1.2"/>',
  target: '<circle cx="10" cy="10" r="6" fill="none" stroke="#222" stroke-width="1.7"/><path d="M10 1V19M1 10H19" stroke="#222" stroke-width="1.7"/>',
  display: ball + '<path d="M12 3Q18 6 18 12Q13 9 12 3Z" fill="#2b1010"/>',
  filter: '<ellipse cx="9" cy="3" rx="8" ry="2" fill="#2f86b4" stroke="#174f70"/><path d="M1 4L8 11V19L11 17V11L17 4Q9 7 1 4Z" fill="#eee" stroke="#333"/><path d="M18 13H23L20.500 16Z" fill="#333"/>',
  plane: '<path d="M4 4L10 2M4 4V18L10 16M10 2L16 1V15L10 17" fill="none" stroke="#444"/><path d="M10 0V20" stroke="#111" stroke-dasharray="4 2"/>',
  origin: '<path d="M3 3V17H16" fill="none" stroke="#222" stroke-width="1.6"/><path d="M3 0L6 5H0ZM20 17L15 14V20Z" fill="#222"/><circle cx="3" cy="17" r="2.500" fill="#222"/>',
  flexAsm: '<path d="M3 9H8V13H12V17H3Z" fill="#fcc92b" stroke="#6b4a00"/><path d="M10 4L13 2L18 3V8L15 10L10 9Z" fill="#6fb9dc" stroke="#174f70"/><path d="M6 8V5H10" stroke="#222" fill="none"/>',

  zoomFit: '<circle cx="12" cy="8" r="6.500" fill="#e4eaee" stroke="#777" stroke-width="1.2"/><path d="M12 4V6M12 10V12M8 8H10M14 8H16" stroke="#555" stroke-width="1.5"/><path d="M7 13L2 18" stroke="#5b9cbf" stroke-width="3"/>',
  zoomArea: '<path d="M7 1H19V13" fill="none" stroke="#666" stroke-dasharray="3 2"/><circle cx="11" cy="9" r="6.500" fill="#dde9ef" stroke="#777" stroke-width="1.2"/><path d="M6 14L1 19" stroke="#5b9cbf" stroke-width="3"/>',
  prevView: telescope + '<path d="M19 14H12M14 11L11 14L14 17" fill="none" stroke="#3b86af" stroke-width="2.500"/>',
  sectionView: '<path d="M1 5Q10 0 19 5V14L14 13V8Q10 6 6 8V18L1 16Z" fill="#d4d4d4" stroke="#555"/><path d="M1 6L6 8V18L1 16ZM12 7L18 6V15L12 18Z" fill="#5f9fc0" stroke="#44697d"/><path d="M1 10L4 8M1 14L5 11M13 12L17 8M13 16L17 12" stroke="#d5e7f0"/>',
  dynView: telescope + '<path d="M10 0L2 7L7 7L4 12L12 5L8 5Z" fill="#f7b64a" stroke="#cb7a22"/><text x="10" y="19" font-size="11" font-weight="bold" fill="#2f7ba5" font-family="Liberation Serif">A</text>',
  orient: '<path d="M6 1H19V13H6ZM1 6L6 1M14 6L19 1M14 18L19 13M10 1V6M6 6V13" fill="none" stroke="#666"/><path d="M1 6H14V18H1Z" fill="#69b2d3" stroke="#44697d"/>',
  shade: '<path d="M2 4L10 1L18 4V15L10 19L2 15Z" fill="#dcecf4" stroke="#666"/><path d="M2 4L8 6V18L2 15Z" fill="#4f97bc" stroke="#44697d"/><path d="M8 6L13 4V16L8 18Z" fill="#94cbe2" stroke="#44697d"/>',
  eye: '<path d="M1 10Q10 2 19 10Q10 18 1 10Z" fill="#e7e7e7" stroke="#999"/><circle cx="10" cy="10" r="4" fill="#999" stroke="#666"/><circle cx="10" cy="10" r="1.500" fill="#333"/><path d="M10 3V17" stroke="#666"/>',
  scene: '<path d="M1 11H19V19H1Z" fill="#444"/><path d="M2 12H5V15H2ZM14 12H17V15H14ZM5 15H8V18H5ZM12 15H15V18H12Z" fill="#eee"/><g transform="translate(1 -1) scale(.9)">' + ball + '</g>',
  monitor: '<rect x="1" y="3" width="17" height="12" fill="#dcdcdc" stroke="#777" stroke-width="1.4"/><path d="M9.500 15V18M5 18H14" stroke="#555" stroke-width="2"/>',
  dockLeft: '<path d="M4 4H16V17H4Z" fill="none" stroke="#aaa"/><path d="M10 7V14L6 10.500Z" fill="#888"/><path d="M12 5V16" stroke="#ccc"/>',
  dockRight: '<path d="M4 4H16V17H4Z" fill="none" stroke="#aaa"/><path d="M11 7V14L15 10.500Z" fill="#888"/><path d="M8 5V16" stroke="#ccc"/>',
  minimize: '<path d="M5 15H15" stroke="#aaa" stroke-width="2.500"/>',
  restore: '<path d="M7 8V5H16V11H12M4 8H12V14H4Z" fill="none" stroke="#aaa" stroke-width="1.2"/>',
  close: '<path d="M5 5L15 15M15 5L5 15" stroke="#aaa" stroke-width="1.5"/>',

  home: '<path d="M4 10V18H16V10" fill="#fff" stroke="#333" stroke-width="1.2"/><path d="M8 18V12H12V18" fill="#fff" stroke="#333"/><path d="M1 11L10 3L19 11" fill="none" stroke="#174f70" stroke-width="3"/><path d="M2 11L10 4L18 11" fill="none" stroke="#4a9cc5"/>',
  library: '<path d="M2 5L8 2L12 4M2 5L6 7V19L3 17ZM6 7L10 5V17L6 19M6 3L10 5L14 3V16L10 17M10 1L14 3L18 2V14L14 16M6 3L10 1L14 0L18 2" fill="#f2f2f2" stroke="#333" stroke-linejoin="round"/>',
  folder,
  palette: '<rect x="1" y="2" width="18" height="16" fill="#fff" stroke="#222" stroke-width="1.3"/><path d="M4 5H9V8H4ZM12 5H16V8H12ZM4 13H7V10H10V13H13V16H4Z" fill="#fcc92b" stroke="#6b4a00"/><path d="M15 11H19V19H15Z" fill="#ddd" stroke="#444"/>',
  ball,

  doc: '<path d="M3 1H12L16 5V18H3Z" fill="#fdfdfd" stroke="#444" stroke-width="1.2"/><path d="M12 1V5H16" fill="none" stroke="#444"/>',
  openDoc: folder + '<path d="M8 2Q14 2 13 10M9 8L13 13L17 8" fill="none" stroke="#2c9a1d" stroke-width="2.500"/>',
  cap,
  help: '<circle cx="9" cy="11" r="7" fill="#fff" stroke="#333" stroke-width="1.3"/><text x="6" y="16" font-size="13" font-weight="bold" fill="#222" font-family="Roboto">?</text><path d="M16 1V8M13 4H20M14 2L18 7M18 2L14 7" stroke="#d0720c" stroke-width=".8"/>',
  swBox: '<g transform="translate(2 0) scale(.9)">' + swCube + '</g><path d="M3 13L10 15L17 13V17L10 19L3 17Z" fill="#eee" stroke="#444"/><path d="M3 13L1 11L4 10M17 13L19 11L16 10" fill="#fff" stroke="#444"/>',
  info: '<circle cx="10" cy="10" r="8.500" fill="#fafdff" stroke="#444" stroke-width="1.2"/><path d="M10 4V7M10 8V16" stroke="#2b7fb0" stroke-width="3"/>',
  swDoc: swCube + '<path d="M11 11H19V19H11Z" fill="#eee" stroke="#333"/><path d="M13 14H17M13 16H17" stroke="#333"/>',
  swRx: swCube + rx,
  share: '<rect x="1" y="1" width="18" height="18" rx="2" fill="#2b7fae" stroke="#1b5474"/><path d="M3 9Q8 3 13 7L15 9M17 11Q12 17 7 13L5 11" fill="none" stroke="#fff" stroke-width="2"/><circle cx="10" cy="10" r="2" fill="#fff"/>',
  wizard: '<g transform="translate(6 6) scale(.75)">' + swCube + '</g><path d="M1 11L5 8L9 12L5 18L1 16Z" fill="#3b86af" stroke="#174f70"/><path d="M6 3L14 10" stroke="#222" stroke-width="2"/><path d="M3 2H5M9 1H11M14 3H16M2 6H4M12 5H14" stroke="#222"/>',
  swList: '<g transform="scale(.7)">' + swCube + '</g><path d="M5 8H14V19H5Z" fill="#fff" stroke="#555"/><path d="M6 14L8 16L11 12" fill="none" stroke="#2c9a1d" stroke-width="2"/><circle cx="14" cy="11" r="3" fill="#bbb" stroke="#666"/><path d="M9 19Q10 14 14 14Q19 14 19 19Z" fill="#bbb" stroke="#666"/>',

  first: '<path d="M4 2V12" stroke="#838387" stroke-width="2"/><path d="M11 2V12L6 7Z" fill="#838387"/>',
  prev: '<path d="M10 2V12L5 7Z" fill="#838387"/>',
  next: '<path d="M6 2V12L11 7Z" fill="#838387"/>',
  last: '<path d="M12 2V12" stroke="#838387" stroke-width="2"/><path d="M5 2V12L10 7Z" fill="#838387"/>',

  sPoint: '<circle cx="10" cy="10" r="1"/>',
  sCenter: '<circle cx="10" cy="10" r="8"/><circle cx="10" cy="10" r="1"/>',
  sLine: '<path d="M2 18L18 2"/><circle cx="10" cy="10" r="1"/>',
  sQuad: '<circle cx="10" cy="10" r="7"/><g fill="#f7f7f7" stroke-width="1"><circle cx="10" cy="3" r="2"/><circle cx="10" cy="17" r="2"/><circle cx="3" cy="10" r="2"/><circle cx="17" cy="10" r="2"/></g>',
  sCross: '<path d="M2 2L7 4L18 18M18 2Q12 3 10 8Q8 12 2 16"/>',
  sNear: '<path d="M2 18L18 2M4 12H11L18 18"/><circle cx="8" cy="12" r="1"/>',
  rTangent: '<circle cx="8" cy="13" r="5"/><path d="M2 3L19 16"/>',
  rPerp: '<path d="M2 9L14 18M18 2L8 13M10 6V12L16 13"/>',
  rParallel: '<path d="M2 5L15 18M6 2L19 15"/>',
  rHV: '<path d="M2 19V2H19"/>',
  rPoints: '<path d="M3 4V17M5 3H18" stroke-dasharray="2 2"/><g stroke-width="1"><circle cx="3" cy="3" r="1.500"/><circle cx="18" cy="3" r="1.500"/><circle cx="3" cy="18" r="1.500"/></g>',
  rLength: '<path d="M2 3V14M18 3V14M3 9H17M6 6L3 9L6 12M14 6L17 9L14 12M2 17H18"/>',
  rGrid: '<path d="M1 3H19M1 8H19M1 13H19M1 18H19M3 1V19M8 1V19M13 1V19M18 1V19" stroke-width="1"/>',
  rAngle: '<path d="M15 2L2 17H19M10 9Q14 11 13 17"/>'
}

const fileTools = ['openPart', 'openAsm']
const evalTools = ['spell', 'tape', 'scale', 'section', 'gauge', 'timing', 'cubeCheck', 'cubeGray', 'sigma', 'flow', 'mirror', 'squeeze', 'docHelp', 'checks']
const simTools = ['simFea', 'flowSim', 'okGray', 'drawWorks', 'lifebuoy']

const ribbon = [
  [
    { icon: 'editPart', label: '编辑零\n部件', off: true },
    { icon: 'insertPart', label: '插入零\n部件', menu: true },
    { icon: 'clip', label: '配合' },
    { icon: 'preview', label: '零部件\n预览窗\n口', off: true },
    { icon: 'pattern', label: '线性零部\n件阵列', menu: true },
    { icon: 'fastener', label: '智能扣\n件' },
    { icon: 'movePart', label: '移动零\n部件', menu: true }
  ],
  [{ icon: 'showHide', label: '显示隐\n藏的零\n部件' }],
  [
    { icon: 'asmFeature', label: '装配体\n特征', menu: true },
    { icon: 'refGeom', label: '参考几\n何体', menu: true }
  ],
  [{ icon: 'motion', label: '新建运\n动算例' }],
  [{ icon: 'bom', label: '材料明\n细表' }],
  [
    { icon: 'explode', label: '爆炸视\n图' },
    { icon: 'explodeGray', label: '爆炸直\n线草图', off: true }
  ],
  [{ icon: 'instant', label: 'Instant3D' }],
  [{ icon: 'speedpak', label: '更新\nSpeedpak' }],
  [{ icon: 'camera', label: '拍快照' }]
]

const tabs = ['装配体', '布局', '草图', '评估', 'SOLIDWORKS 插件', 'SOLIDWORKS MBD']
const managerTabs = ['asm', 'props', 'config', 'target', 'display']

const tree = [
  { icon: 'plane', text: '右视基准面' },
  { icon: 'origin', text: '原点' },
  { icon: 'asm', text: '(-) 机架焊合<1> (默认<显示状态-' },
  { icon: 'part', text: '(-) 地轮<1> (默认<<默认>_显示状' },
  { icon: 'part', text: '(-) 轴承6012<1> (默认<<默认>_' },
  { icon: 'part', text: '(-) 轴承6012<2> (默认<<默认>_' },
  { icon: 'part', text: '(-) 地论轴SLDPRT<1> (默认<<默' },
  { icon: 'part', text: '(-) 地轮<2> (默认<<默认>_显示状' },
  { icon: 'part', text: '(-) 轴承6012<5> (默认<<默认>_' },
  { icon: 'part', text: '(-) 轴承6012<6> (默认<<默认>_' },
  { icon: 'part', text: '(-) 取料轴<1> (默认<<默认>_显示' },
  { icon: 'asm', text: '(-) 动力输入装置<1> (默认<默认_' },
  { icon: 'part', text: '(-) 取料架<1> (默认<<默认>_显示' },
  { icon: 'part', text: '(-) 带轮<1> (默认<<默认>_显示状' },
  { icon: 'part', text: '(-) 带轮2<1> (默认<<默认>_显示' },
  { icon: 'part', text: '(-) 前轮胎<1> (默认<<默认>_显示' },
  { icon: 'asm', text: '(-) 爬坡输送机SW设计模型<1> (默' },
  { icon: 'flexAsm', text: '(-) 油缸<1> (默认<显示状态-1>)' }
]

const viewTools = [
  { icon: 'zoomFit' },
  { icon: 'zoomArea' },
  { icon: 'prevView' },
  { icon: 'sectionView' },
  { icon: 'dynView' },
  { icon: 'orient', menu: true },
  { icon: 'shade', menu: true },
  { icon: 'eye', menu: true },
  { icon: 'ballPencil' },
  { icon: 'scene', menu: true },
  { icon: 'monitor', menu: true }
]
const windowTools = ['dockLeft', 'dockRight', 'minimize', 'restore', 'close']
const taskTabs = ['home', 'library', 'folder', 'palette', 'ball', 'props']

const startLinks = [
  { id: 'new', icon: 'doc' },
  { id: 'open', icon: 'openDoc' },
  { id: 'tutorials', icon: 'cap' },
  { id: 'training', icon: 'cap' },
  { id: 'whats new', icon: 'help' },
  { id: 'introduction', icon: 'swBox' },
  { id: 'info', icon: 'info' }
]
const toolLinks = [
  { id: 'property tab builder', icon: 'swDoc' },
  { id: 'rx', icon: 'swRx' },
  { id: 'benchmark', icon: 'swRx' },
  { id: 'share', icon: 'share' },
  { id: 'settings wizard', icon: 'wizard' },
  { id: 'my products', icon: 'swList' }
]

const sheetNav = ['first', 'prev', 'next', 'last']
const sheets = ['模型', '3D 视图', '运动算例 1']
const snapTools = ['sPoint', 'sCenter', 'sLine', 'sQuad', 'sCross', 'sNear']
const relationTools = ['rTangent', 'rPerp', 'rParallel', 'rHV', 'rPoints', 'rLength', 'rGrid', 'rAngle']

// truss members, back to front
const beams = [
  'M355 392L488 528',
  'M412 350L550 472',
  'M605 200L752 315',
  'M604 195L578 335L560 465',
  'M790 50L772 180L762 300',
  'M620 188L925 186',
  'M420 348L600 338L755 322',
  'M268 470L290 488',
  'M180 535L788 45',
  'M795 45L935 172',
  'M175 535L320 665'
]

const slats = [
  'M952 205L990 240',
  'M882 245L955 308',
  'M825 290L888 345',
  'M766 338L832 397',
  'M710 385L778 445',
  'M652 430L724 495',
  'M596 476L670 546',
  'M538 520L616 592',
  'M468 570L555 645',
  'M430 600L482 660',
  'M388 632L424 668'
]

const underLines = []
for (let i = 0; i < 10; i++) {
  underLines.push(`M${600 + i * 2} ${672 + i * 8}L${1088 - i * 10} ${205 + i * 16}`)
}

const screws = []
for (let i = 0; i < 24; i++) {
  screws.push(`M${382 + i * 8} ${708 - i}L${388 + i * 8} ${738 - i * 2}`)
}

const tines = []
for (let i = 0; i < 22; i++) {
  const x = 62 + i * 8
  const y = 664 + i * 8
  tines.push(`M${x} ${y}L${x - 12} ${y + 20}L${x + 4} ${y + 28}`)
}
</script>

<style>
body {
  margin: 0;
  overflow: hidden;
}
</style>

<style scoped>
* {
  box-sizing: border-box;
}

.app {
  height: 100vh;
  display: flex;
  flex-direction: column;
  border-left: 2px solid #dfe2f0;
  background: #f7f7f7;
  color: #000;
  font: 12px/13px Roboto, "Noto Sans CJK SC", sans-serif;
}

button {
  margin: 0;
  padding: 0;
  border: 0;
  background: none;
  color: inherit;
  font: inherit;
}

svg {
  display: block;
  width: 20px;
  height: 20px;
  flex: none;
}

.caret {
  display: block;
  width: 0;
  border: 3px solid transparent;
  border-top-color: #333;
  border-bottom: 0;
}

/* title strip */
.title-strip {
  height: 9px;
  flex: none;
  display: flex;
  justify-content: space-between;
  overflow: hidden;
  border-bottom: 1px solid #777;
}

.brand {
  width: 145px;
  margin-left: 10px;
  padding-left: 6px;
  display: flex;
  gap: 8px;
  overflow: hidden;
  border: 1px solid #aaa;
  border-top: 0;
  background: linear-gradient(90deg, #fff, #ddd);
}

.brand-mark {
  width: 26px;
  height: 8px;
  fill: none;
  stroke: #d9261c;
  stroke-width: 3;
}

.brand-name {
  margin-top: -12px;
  color: #d9261c;
  font-size: 16px;
  line-height: 16px;
}

.quick-bar {
  width: 573px;
  border-left: 1px solid #999;
}

.quick-bar svg {
  width: 560px;
  height: 8px;
}

/* toolbars */
.toolbar {
  height: 32px;
  flex: none;
  display: flex;
  border-bottom: 1px solid #808080;
}

.tool-group {
  display: flex;
  align-items: center;
  border-right: 1px solid #808080;
}

.tool-group.first {
  padding: 0 7px 0 3px;
}

.tool-group.second {
  padding: 0 8px 0 3px;
}

.grip {
  width: 3px;
  height: 25px;
  margin-right: 7px;
  background: repeating-linear-gradient(#aaa 0 2px, transparent 2px 4px);
}

.tool {
  width: 27px;
  height: 24px;
  display: flex;
  align-items: center;
  justify-content: center;
}

.sep {
  width: 1px;
  height: 22px;
  margin: 0 5px 0 3px;
  background: #909090;
}

.sep.double {
  width: 8px;
  margin: 0 6px 0 2px;
  border: solid #909090;
  border-width: 0 1px;
  background: none;
}

.select-tool {
  display: flex;
  height: 26px;
  border: 1px solid #9a9a9a;
}

.select-main {
  width: 30px;
  margin: -1px 0 -1px -1px;
  padding: 0 4px;
  border: 1px solid #2f7fb5;
  background: #b3b3b3;
}

.select-drop {
  width: 12px;
  display: flex;
  align-items: center;
  justify-content: center;
}

.drop {
  width: 17px;
  display: flex;
  justify-content: center;
}

/* ribbon */
.ribbon {
  height: 82px;
  flex: none;
  display: flex;
  padding: 1px 0 3px 3px;
  border-bottom: 1px solid #808080;
}

.ribbon-group {
  display: flex;
  padding: 0 1px;
  border-right: 1px solid #c4c4c4;
}

.ribbon-group:first-child {
  padding-left: 0;
}

.ribbon-group:nth-child(n + 7) {
  padding: 0;
}

.ribbon-group:last-child {
  border-right: 0;
}

.command {
  display: flex;
  flex-direction: column;
  align-items: center;
  padding: 12px 5px 0;
}

.command.menu {
  padding-top: 5px;
}

.command:disabled {
  color: #bcbcbc;
}

.command-label {
  margin-top: 1px;
  white-space: pre;
  text-align: center;
}

.command .caret {
  margin-top: 14px;
}

/* workspace */
.workspace {
  flex: 1;
  min-height: 0;
  display: grid;
  grid-template-columns: 279px minmax(0, 1fr) 41px;
  grid-template-rows: 22px minmax(0, 1fr) 14px;
}

.ribbon-tabs {
  grid-area: 1 / 1 / 2 / 3;
  z-index: 1;
  justify-self: start;
  display: flex;
  border-bottom: 1px solid #808080;
}

.ribbon-tabs button {
  padding: 0 6px 0 7px;
  border-right: 1px solid #808080;
  background: #d3d3d3;
  color: #222;
}

.ribbon-tabs button:not(:first-child):not(:nth-child(n + 5)) {
  padding: 0 16px 0 15px;
}

.ribbon-tabs button.active {
  padding: 0 9px 0 10px;
  background: #f7f7f7;
}

.side {
  grid-area: 2 / 1;
  min-height: 0;
  display: flex;
  border-right: 1px solid #808080;
}

.mini-bar {
  width: 30px;
  height: 73px;
  display: flex;
  flex-direction: column;
  align-items: center;
  gap: 5px;
  padding-top: 3px;
  border-bottom: 1px solid #999;
}

.grip-row {
  width: 27px;
  height: 2px;
  margin-bottom: 6px;
  background: repeating-linear-gradient(90deg, #aaa 0 2px, transparent 2px 4px);
}

.manager {
  flex: 1;
  min-width: 0;
  min-height: 0;
  display: flex;
  flex-direction: column;
  margin: 2px;
}

.splitter {
  height: 16px;
  flex: none;
  display: flex;
  align-items: center;
  justify-content: center;
  border: solid #c8c8c8;
  border-width: 1px 0;
}

.knob {
  width: 6px;
  height: 6px;
  border: 1px solid #888;
  border-radius: 50%;
  background: #ddd;
}

.manager-tabs {
  height: 26px;
  flex: none;
  display: flex;
  margin-top: 4px;
}

.manager-tabs button {
  width: 40px;
  display: flex;
  align-items: center;
  justify-content: center;
  border: solid #808080;
  border-width: 1px 1px 1px 0;
  background: #d3d3d3;
}

.manager-tabs button.active {
  border-bottom-color: transparent;
  background: #f7f7f7;
}

.manager-tabs button.more {
  width: 24px;
  margin-left: auto;
  border: 0;
  background: none;
}

.filter {
  height: 26px;
  flex: none;
  display: flex;
  align-items: center;
  margin: 0 2px 0 3px;
  padding-left: 2px;
  border: 1px solid #c4c4c4;
}

.filter svg {
  width: 26px;
}

.filter input {
  flex: 1;
  min-width: 0;
  border: 0;
  outline: 0;
  background: none;
  font: inherit;
}

.tree-area {
  flex: 1;
  min-height: 0;
  display: flex;
}

.tree {
  flex: 1;
  min-width: 0;
  margin: 0;
  padding: 1px 0 0 7px;
  overflow: hidden;
  list-style: none;
  font-family: "Noto Sans", "Noto Sans CJK SC", sans-serif;
}

.tree li {
  height: 22px;
  display: flex;
  align-items: center;
  white-space: nowrap;
}

.twisty {
  width: 5px;
  height: 8px;
  flex: none;
  margin-right: 13px;
  background: #777;
  clip-path: polygon(0 0, 100% 50%, 0 100%);
}

.twisty-gap {
  width: 18px;
  flex: none;
}

.node-text {
  margin-left: 3px;
  line-height: 22px;
}

/* scroll bars */
.vscroll {
  width: 13px;
  display: flex;
  flex-direction: column;
  align-items: center;
  background: #eee;
}

.arrow {
  border: 3px solid transparent;
}

.arrow.up {
  margin: 4px 0 83px;
  border-bottom-color: #444;
}

.arrow.down {
  margin: 71px 0 5px;
  border-top-color: #444;
}

.arrow.left {
  border-right-color: #333;
}

.arrow.right {
  border-left-color: #333;
}

.thumb {
  display: flex;
  align-items: center;
  justify-content: center;
  border: 1px solid #989898;
  background: linear-gradient(#f8f8f8, #d0d0d0);
}

.vscroll .thumb {
  width: 13px;
  flex: 1;
  background: linear-gradient(90deg, #f8f8f8, #d0d0d0);
}

.vscroll .thumb i {
  width: 8px;
  height: 8px;
  background: repeating-linear-gradient(#666 0 1px, #f4f4f4 1px 3px);
}

.hscroll {
  height: 16px;
  flex: none;
  display: flex;
  align-items: center;
  background: #eee;
}

.manager .hscroll {
  margin-right: 14px;
  padding: 0 4px 0 1px;
}

.hscroll .thumb {
  width: 123px;
  height: 15px;
  margin: 0 auto 0 10px;
}

.hscroll .thumb i {
  width: 8px;
  height: 7px;
  background: repeating-linear-gradient(90deg, #666 0 1px, #f4f4f4 1px 3px);
}

/* graphics area */
.viewport {
  grid-area: 1 / 2 / 3 / 3;
  position: relative;
  margin-right: 3px;
  border-bottom: 1px solid #808080;
  background:
    radial-gradient(ellipse 62% 72% at 0 0, #fff 30%, rgba(255, 255, 255, 0) 100%),
    linear-gradient(#eceff6 0, #dde0ec 30%, #dfe2ed 56%, #f3f4f9 70%, #fff 84%);
}

.view-bar {
  height: 30px;
  display: flex;
  justify-content: space-between;
  padding: 0 5px 0 237px;
}

.view-tools {
  display: flex;
  align-items: center;
}

.view-tool {
  width: 26px;
  display: flex;
  justify-content: center;
}

.view-drop {
  width: 14px;
  display: flex;
  justify-content: center;
}

.view-drop .caret {
  border-top-color: #999;
}

.flyout {
  position: absolute;
  top: 230px;
  left: -1px;
  width: 9px;
  height: 39px;
  display: flex;
  align-items: center;
  justify-content: center;
  border: 1px solid #999;
  border-left: 0;
  background: #f7f7f7;
}

.task-tabs {
  position: absolute;
  top: 44px;
  right: -3px;
  width: 26px;
  border: 1px solid #808080;
  border-right: 0;
}

.task-tabs button {
  width: 100%;
  height: 24px;
  display: flex;
  align-items: center;
  justify-content: center;
  border-bottom: 1px solid #808080;
  background: #d3d3d3;
}

.task-tabs button.active {
  background: #f7f7f7;
}

.task-tabs button:last-child {
  height: 23px;
  border-bottom: 0;
}

.model {
  position: absolute;
  top: 127px;
  left: calc(50% - 178px);
  width: 390px;
  height: 300px;
  overflow: visible;
}

.triad {
  position: absolute;
  bottom: 49px;
  left: 4px;
  width: 45px;
  height: 48px;
  font: bold 28px "Liberation Serif", serif;
}

/* task pane */
.task-pane {
  grid-area: 1 / 3 / 4 / 4;
  min-width: 0;
  display: flex;
  flex-direction: column;
  overflow: hidden;
  border-left: 1px solid #808080;
  background: #f9f9f9;
}

.task-head {
  height: 18px;
  flex: none;
  display: flex;
  align-items: center;
  gap: 17px;
  padding-left: 8px;
  border-bottom: 1px solid #222;
  background: #a9a9ac;
}

.task-head button {
  width: 11px;
  height: 16px;
  font-size: 18px;
  line-height: 12px;
}

.task-body {
  flex: 1;
  min-height: 0;
  display: flex;
  flex-direction: column;
  padding: 5px 0 0 13px;
  overflow: hidden;
}

.task-body section {
  flex: none;
  border-top: 1px solid #888;
}

.task-body h2 {
  height: 21px;
  margin: 0 0 0 3px;
  overflow: hidden;
  color: #333;
  font: bold 12px/21px "Open Sans", "Noto Sans CJK SC", sans-serif;
  white-space: nowrap;
}

.task-body a {
  height: 28px;
  display: flex;
  align-items: center;
  padding-left: 2px;
}

.task-body a i {
  width: 1px;
  height: 6px;
  margin-left: 3px;
  background: repeating-linear-gradient(#555 0 2px, transparent 2px 4px);
}

.start {
  height: 245px;
}

.tools {
  height: 215px;
}

/* sheet tabs */
.sheet-tabs {
  grid-area: 3 / 1 / 4 / 3;
  display: flex;
  margin-left: 33px;
  padding-left: 25px;
  border-left: 1px solid #9ab7c0;
}

.task-pane .hscroll .thumb {
  flex: none;
  width: 123px;
}

.task-pane .arrow.left {
  margin-left: 3px;
}

.sheet-nav {
  display: flex;
  border: 1px solid #777;
  border-bottom: 0;
  background: #a9a9ad;
}

.sheet-nav button {
  width: 16px;
  border-right: 1px solid #88888c;
}

.sheet-nav button:last-child {
  width: 15px;
}

.sheet-nav svg {
  width: 15px;
  height: 13px;
}

.sheet {
  padding: 0 8px 0 7px;
  border-right: 1px solid #808080;
  background: #d3d3d3;
}

.sheet.active {
  padding: 0 10px 0 11px;
  background: #f7f7f7;
}

.sheet:last-child {
  padding-right: 14px;
}

/* sketch toolbar */
.sketch-bar {
  height: 34px;
  padding-top: 3px;
}

.sketch-bar .tool-group {
  padding: 0 8px 0 3px;
}

.sketch-bar .tool svg {
  fill: none;
  stroke: #bfbfbf;
  stroke-width: 1.5;
}

.sketch-bar .sep {
  margin: 0 4px 0 3px;
}
</style>
